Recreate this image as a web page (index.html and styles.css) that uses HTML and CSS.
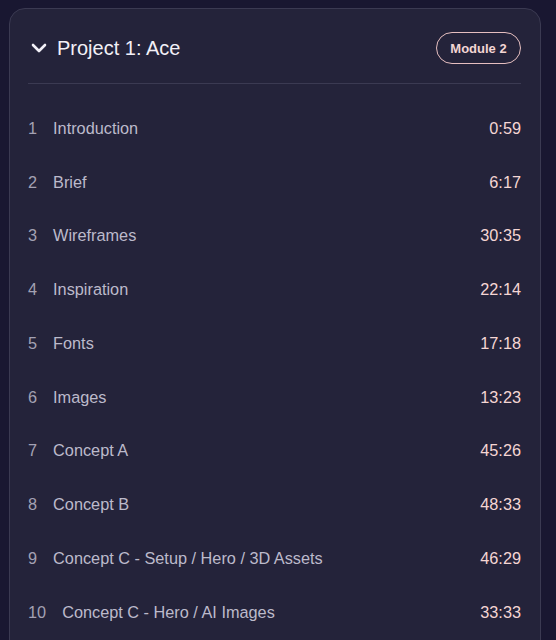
FILE: index.html
```html
<!DOCTYPE html>
<html>
<head>
<meta charset="utf-8">
<link rel="stylesheet" href="styles.css">
</head>
<body>
<section class="card">
  <header class="head">
    <div class="head-left">
      <svg class="chev" width="16" height="10" viewBox="0 0 16 10"><path d="M2 2 L8 8 L14 2" fill="none" stroke="#f2f0f7" stroke-width="2.6" stroke-linecap="round" stroke-linejoin="round"/></svg>
      <h2 class="title">Project 1: Ace</h2>
    </div>
    <span class="badge">Module 2</span>
  </header>
  <ul class="list">
    <li class="row"><span class="num">1</span><span class="name">Introduction</span><span class="time">0:59</span></li>
    <li class="row"><span class="num">2</span><span class="name">Brief</span><span class="time">6:17</span></li>
    <li class="row"><span class="num">3</span><span class="name">Wireframes</span><span class="time">30:35</span></li>
    <li class="row"><span class="num">4</span><span class="name">Inspiration</span><span class="time">22:14</span></li>
    <li class="row"><span class="num">5</span><span class="name">Fonts</span><span class="time">17:18</span></li>
    <li class="row"><span class="num">6</span><span class="name">Images</span><span class="time">13:23</span></li>
    <li class="row"><span class="num">7</span><span class="name">Concept A</span><span class="time">45:26</span></li>
    <li class="row"><span class="num">8</span><span class="name">Concept B</span><span class="time">48:33</span></li>
    <li class="row"><span class="num">9</span><span class="name">Concept C - Setup / Hero / 3D Assets</span><span class="time">46:29</span></li>
    <li class="row"><span class="num">10</span><span class="name">Concept C - Hero / AI Images</span><span class="time">33:33</span></li>
  </ul>
</section>
</body>
</html>
```
FILE: styles.css
```css
html, body {
  margin: 0;
  background: #191731;
  font-family: "Liberation Sans", Arial, sans-serif;
}
body {
  padding: 8px 15px 0 9px;
  height: 640px;
  box-sizing: border-box;
  overflow: hidden;
}
.card {
  background: #24233a;
  border: 1px solid #3b3a52;
  border-radius: 16px;
  padding: 0 19px 40px 18px;
  min-height: 700px;
}
.head {
  display: flex;
  align-items: center;
  justify-content: space-between;
  padding: 23px 0 19px;
  border-bottom: 1px solid #3b3a52;
}
.head-left {
  display: flex;
  align-items: center;
  gap: 10px;
  padding-left: 3px;
}
.chev { display: block; }
.title {
  margin: 0;
  font-size: 20px;
  font-weight: 400;
  color: #f2f0f7;
  line-height: 24px;
}
.badge {
  box-sizing: border-box;
  height: 32px;
  width: 85px;
  border: 1px solid #e6bfc0;
  border-radius: 16px;
  display: flex;
  align-items: center;
  justify-content: center;
  font-size: 13px;
  font-weight: 700;
  color: #f3d5d3;
}
.list {
  list-style: none;
  margin: 0;
  padding: 17.6px 0 0;
}
.row {
  display: flex;
  align-items: center;
  height: 53.75px;
  font-size: 16.3px;
}
.num {
  color: #a3a1b3;
  margin-right: 16px;
}
.name {
  color: #bcbacb;
  flex: 1;
}
.time {
  color: #f5d6d4;
}
```
